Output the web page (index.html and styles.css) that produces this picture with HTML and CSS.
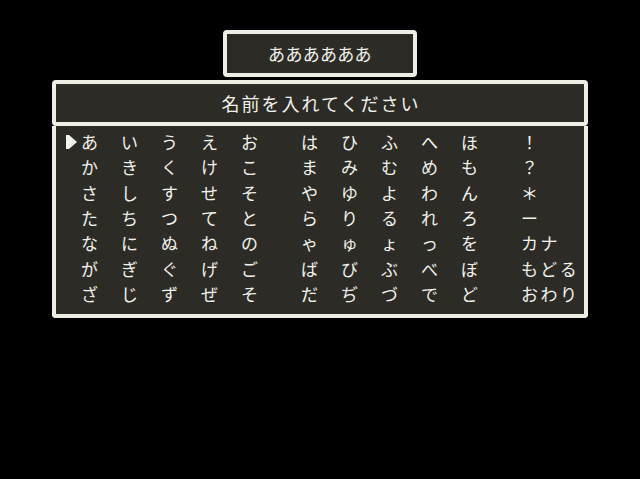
FILE: index.html
```html
<!DOCTYPE html>
<html lang="ja">
<head>
<meta charset="utf-8">
<link rel="stylesheet" href="styles.css">
</head>
<body>
<div class="screen">
  <div class="namebox">ああああああ</div>
  <div class="titlebox">名前を入れてください</div>
  <div class="gridbox">
    <div class="grid">
      <span class="cell cur">あ<svg class="cursor" width="11" height="14" viewBox="0 0 11 14"><polygon points="0,0 3,0 11,7 3,14 0,14" fill="#f4f4ef"/></svg></span><span class="cell">い</span><span class="cell">う</span><span class="cell">え</span><span class="cell">お</span>
      <span class="cell">は</span><span class="cell">ひ</span><span class="cell">ふ</span><span class="cell">へ</span><span class="cell">ほ</span><span class="cell">！</span>

      <span class="cell">か</span><span class="cell">き</span><span class="cell">く</span><span class="cell">け</span><span class="cell">こ</span>
      <span class="cell">ま</span><span class="cell">み</span><span class="cell">む</span><span class="cell">め</span><span class="cell">も</span><span class="cell">？</span>

      <span class="cell">さ</span><span class="cell">し</span><span class="cell">す</span><span class="cell">せ</span><span class="cell">そ</span>
      <span class="cell">や</span><span class="cell">ゆ</span><span class="cell">よ</span><span class="cell">わ</span><span class="cell">ん</span><span class="cell">＊</span>

      <span class="cell">た</span><span class="cell">ち</span><span class="cell">つ</span><span class="cell">て</span><span class="cell">と</span>
      <span class="cell">ら</span><span class="cell">り</span><span class="cell">る</span><span class="cell">れ</span><span class="cell">ろ</span><span class="cell">ー</span>

      <span class="cell">な</span><span class="cell">に</span><span class="cell">ぬ</span><span class="cell">ね</span><span class="cell">の</span>
      <span class="cell">ゃ</span><span class="cell">ゅ</span><span class="cell">ょ</span><span class="cell">っ</span><span class="cell">を</span><span class="cell wide">カナ</span>

      <span class="cell">が</span><span class="cell">ぎ</span><span class="cell">ぐ</span><span class="cell">げ</span><span class="cell">ご</span>
      <span class="cell">ば</span><span class="cell">び</span><span class="cell">ぶ</span><span class="cell">べ</span><span class="cell">ぼ</span><span class="cell wide">もどる</span>

      <span class="cell">ざ</span><span class="cell">じ</span><span class="cell">ず</span><span class="cell">ぜ</span><span class="cell">そ</span>
      <span class="cell">だ</span><span class="cell">ぢ</span><span class="cell">づ</span><span class="cell">で</span><span class="cell">ど</span><span class="cell wide">おわり</span>
    </div>
  </div>
</div>
</body>
</html>
```

FILE: styles.css
```css
html, body {
  margin: 0;
  padding: 0;
  background: #000;
}
body {
  width: 640px;
  height: 479px;
  overflow: hidden;
  font-family: "Noto Sans CJK JP", "Noto Sans", sans-serif;
  color: #f2f2ec;
}
.screen {
  display: flex;
  flex-direction: column;
  align-items: center;
  padding-top: 30px;
}
.namebox {
  box-sizing: border-box;
  width: 194px;
  height: 47px;
  background: #2c2b26;
  border: 4px solid #efeee4;
  border-radius: 4px;
  display: flex;
  align-items: center;
  justify-content: center;
  font-size: 17px;
  letter-spacing: 0.3px;
  line-height: 1;
}
.titlebox {
  box-sizing: border-box;
  margin-top: 3px;
  width: 536px;
  height: 46px;
  background: #2c2b26;
  border: 4px solid #efeee4;
  border-radius: 4px;
  display: flex;
  align-items: center;
  justify-content: center;
  font-size: 18px;
  letter-spacing: 2px;
  padding-left: 2px;
  line-height: 1;
}
.gridbox {
  box-sizing: border-box;
  width: 536px;
  height: 192px;
  background: #2c2b26;
  border: 4px solid #efeee4;
  border-top: 0;
  border-radius: 0 0 4px 4px;
  padding: 3px 0 0 25px;
}
.grid {
  display: grid;
  grid-template-columns: 40px 40px 40px 40px 60px 40px 40px 40px 40px 60px auto;
  grid-auto-rows: 25.33px;
  font-size: 17px;
  line-height: 25.33px;
}
.cell {
  white-space: nowrap;
}
.wide {
  letter-spacing: 2.5px;
}
.cur {
  position: relative;
}
.cursor {
  position: absolute;
  left: -15px;
  top: 6px;
}
```
